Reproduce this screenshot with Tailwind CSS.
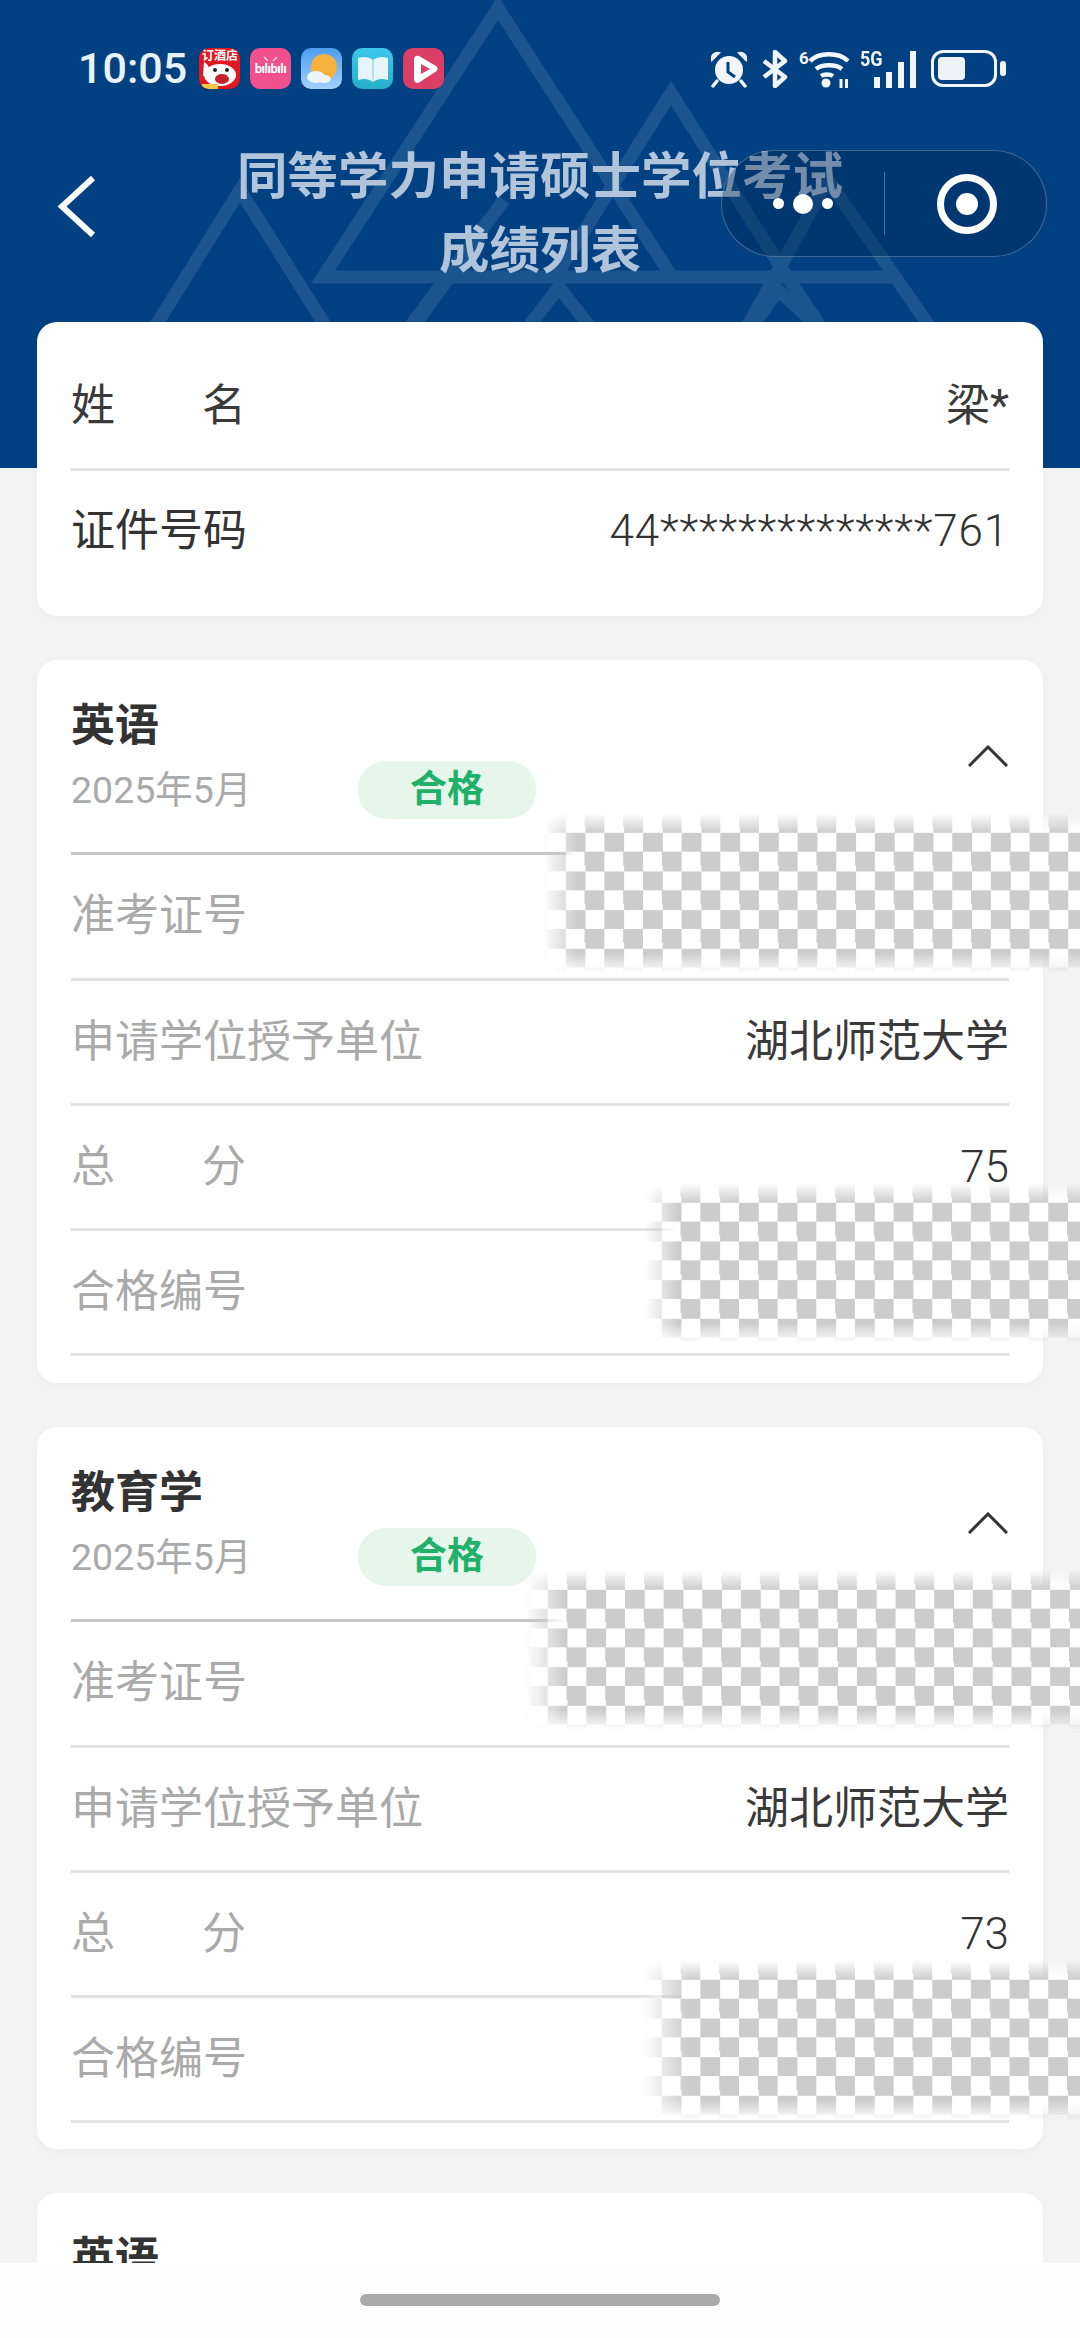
<!DOCTYPE html>
<html lang="zh-CN">
<head>
    <meta charset="UTF-8">
    <meta name="viewport" content="width=device-width, initial-scale=1.0">
    <title>成绩列表</title>
    <script src="https://cdn.jsdelivr.net/npm/@tailwindcss/browser@4"></script>
</head>
<body class="bg-[#f3f3f3] font-['Roboto','Noto_Sans_CJK_SC',sans-serif]">
<div class="relative w-[1080px] h-[2338px] overflow-hidden">

    <!-- 顶部蓝色区域 -->
    <header class="relative h-[468px] pt-[48px] bg-[#024181] overflow-hidden">
        <svg class="absolute inset-0" width="1080" height="468" fill="none" stroke="#1a558f" stroke-width="13">
            <path d="M672 277 L498 8 L323 277 H899"/>
            <path d="M555 277 L671 93 L787 277 L850 370"/>
            <path d="M740 340 L828 180 L932 330"/>
            <path d="M400 340 L504 200"/>
            <path d="M153 330 L240 190 L328 330"/>
            <path d="M411 330 L480 235"/>
            <path d="M526 330 L559 287 L592 330"/>
            <path d="M750 330 L778 290 L822 330"/>
        </svg>

        <!-- 状态栏 -->
        <div class="relative flex items-center h-[41px] pl-[78px] pr-[74px]">
            <span class="text-[43px] leading-[41px] font-medium text-[#e9f2fb] w-[121px] shrink-0">10:05</span>
            <div class="flex gap-[10px]">
                <div class="relative w-[41px] h-[41px] rounded-[10px] bg-[#e3171f] overflow-hidden">
                    <span class="absolute left-[3px] top-[2px] text-[12px] leading-[13px] font-bold text-white whitespace-nowrap">订酒店</span>
                    <svg class="absolute inset-0" width="41" height="41"><ellipse cx="21" cy="27" rx="16" ry="11" fill="#fff"/><path d="M5 14c4 2 6 6 5 12l-6 2z" fill="#fff"/><ellipse cx="23" cy="31" rx="7" ry="5" fill="#c5242b"/><circle cx="16" cy="22" r="2" fill="#222"/><circle cx="28" cy="22" r="2" fill="#222"/><rect x="3" y="36" width="16" height="5" fill="#f4c84a"/></svg>
                </div>
                <div class="relative w-[41px] h-[41px] rounded-[10px] bg-[#f0508c] flex items-center justify-center">
                    <svg class="absolute inset-0" width="41" height="41" fill="none" stroke="#ffd3e3" stroke-width="1.500"><path d="M14 9l4 4M27 9l-4 4"/></svg>
                    <span class="relative text-[13px] leading-none font-bold text-white tracking-[-0.5px]">bılıbılı</span>
                </div>
                <div class="relative w-[41px] h-[41px] rounded-[10px] bg-gradient-to-b from-[#4d9cf0] to-[#a3d2fa] overflow-hidden">
                    <svg class="absolute inset-0" width="41" height="41"><circle cx="23" cy="19" r="13" fill="#f7b23c"/><ellipse cx="15" cy="29" rx="9" ry="6" fill="#eef6fc"/><ellipse cx="23" cy="31" rx="7" ry="4" fill="#eef6fc"/></svg>
                </div>
                <div class="relative w-[41px] h-[41px] rounded-[10px] bg-gradient-to-b from-[#3cc8ec] to-[#25afc8] overflow-hidden">
                    <svg class="absolute inset-0" width="41" height="41"><path d="M6 10c6-2 11-1 15 2c4-3 9-4 15-2v22c-6-2-11-1-15 2c-4-3-9-4-15-2z" fill="#e6f4fb"/><path d="M21 12v22" stroke="#b7dcec" stroke-width="2"/></svg>
                </div>
                <div class="relative w-[41px] h-[41px] rounded-[10px] bg-[#dc3e66] overflow-hidden">
                    <svg class="absolute inset-0" width="41" height="41"><path d="M11 11c0-3 3-4 5-3l17 10c2 1.500 2 4 0 5.500l-17 11c-2 1-5 0-5-3z" fill="#fff"/><path d="M18 16l9 5-9 5z" fill="#dc3e66"/></svg>
                </div>
            </div>
            <div class="ml-auto flex items-center">
                <!-- 闹钟 -->
                <svg class="w-[38px] h-[38px]" viewBox="0 0 38 38">
                    <circle cx="19" cy="20" r="14" fill="#f2f6fb"/>
                    <path d="M2 10 L9 3 C5 2 1 5 2 10Z M36 10 L29 3 C33 2 37 5 36 10Z" fill="#f2f6fb" stroke="#f2f6fb" stroke-width="2"/>
                    <path d="M7 31l-4 5M31 31l4 5" stroke="#f2f6fb" stroke-width="3.500" stroke-linecap="round"/>
                    <path d="M18 12v10l7 5" fill="none" stroke="#024181" stroke-width="3"/>
                </svg>
                <!-- 蓝牙 -->
                <svg class="ml-[14px] w-[26px] h-[38px]" viewBox="0 0 26 38" fill="none" stroke="#f2f6fb" stroke-width="4.500" stroke-linejoin="round">
                    <path d="M2 11l21 16-10 9V2l10 9L2 27"/>
                </svg>
                <!-- wifi -->
                <div class="relative ml-[11px] w-[52px] h-[40px]">
                    <span class="absolute left-0 top-0 text-[17px] leading-[18px] font-bold text-[#f2f6fb]">6</span>
                    <svg class="absolute inset-0" width="52" height="40" fill="none" stroke="#f2f6fb" stroke-width="4.500">
                        <path d="M11 12c9-9 29-9 38 0M17 20c6-5 20-5 26 0M22 27c3-2 9-2 12 0"/>
                        <circle cx="27" cy="34" r="4.500" fill="#f2f6fb" stroke="none"/>
                        <path d="M42 39v-9M47.500 30v9" stroke-width="3"/>
                    </svg>
                </div>
                <!-- 5G 信号 -->
                <div class="relative ml-[9px] w-[56px] h-[38px]">
                    <span class="absolute left-0 top-0 text-[20px] leading-[18px] font-bold text-[#f2f6fb] scale-x-90 origin-left">5G</span>
                    <div class="absolute right-0 bottom-0 flex items-end gap-[6px]">
                        <div class="w-[6px] h-[11px] bg-[#f2f6fb]"></div>
                        <div class="w-[6px] h-[16px] bg-[#f2f6fb]"></div>
                        <div class="w-[6px] h-[26px] bg-[#f2f6fb]"></div>
                        <div class="w-[6px] h-[37px] bg-[#f2f6fb]"></div>
                    </div>
                </div>
                <!-- 电池 -->
                <div class="ml-[15px] relative flex items-center">
                    <div class="w-[66px] h-[37px] rounded-[12px] border-[3px] border-[#f2f6fb] p-[4px]">
                        <div class="w-[27px] h-full rounded-[4px] bg-[#eef3fa]"></div>
                    </div>
                    <div class="ml-[3px] w-[6px] h-[15px] rounded-[3px] bg-[#f2f6fb]"></div>
                </div>
            </div>
        </div>

        <!-- 导航 -->
        <svg class="absolute left-[55px] top-[170px]" width="44" height="74" fill="none" stroke="#fff" stroke-width="6">
            <path d="M38 8 L7 36.500 L38 65"/>
        </svg>
        <h1 class="absolute left-0 top-[135px] w-[1080px] text-center text-[50.500px] leading-[74px] font-bold text-[#b1c4da] font-['Noto_Sans_CJK_SC',sans-serif]">同等学力申请硕士学位考试<br>成绩列表</h1>

        <!-- 小程序胶囊 -->
        <div class="absolute left-[721px] top-[150px] w-[326px] h-[107px] rounded-full bg-[#01244f]/35 border border-white/25 flex items-center">
            <div class="w-[162px] flex items-center justify-center gap-[9px]">
                <div class="w-[11px] h-[11px] rounded-full bg-white"></div>
                <div class="w-[20px] h-[20px] rounded-full bg-white"></div>
                <div class="w-[11px] h-[11px] rounded-full bg-white"></div>
            </div>
            <div class="w-px h-[63px] bg-white/30"></div>
            <div class="flex-1 flex items-center justify-center pl-[3px]">
                <div class="w-[60px] h-[60px] rounded-full border-[7px] border-white flex items-center justify-center">
                    <div class="w-[22px] h-[22px] rounded-full bg-white"></div>
                </div>
            </div>
        </div>
    </header>

    <main class="relative -mt-[146px] px-[37px] flex flex-col gap-[44px]">

        <!-- 个人信息 -->
        <section class="bg-white rounded-[20px] h-[294px] px-[34px] shadow-[0_2px_10px_rgba(0,0,0,0.03)]">
            <div class="h-[149px] border-b-[3px] border-[#e2e2e2] flex items-center justify-between text-[44px] text-[#3a3a3a] pt-[22px]">
                <div class="flex justify-between w-[175px]"><span>姓</span><span>名</span></div>
                <span>梁*</span>
            </div>
            <div class="h-[120px] flex items-center justify-between text-[44px] text-[#333]">
                <span>证件号码</span>
                <span class="font-light tracking-[0.85px]">44**************761</span>
            </div>
        </section>

        <!-- 英语 -->
        <section class="relative bg-white rounded-[20px] h-[723px] px-[34px] shadow-[0_2px_10px_rgba(0,0,0,0.03)]">
            <div class="relative h-[195px] border-b-[3px] border-[#c6c6c6]">
                <div class="pt-[41px] text-[44px] leading-[50px] font-bold text-[#333]">英语</div>
                <div class="flex items-center mt-[10px]">
                    <span class="w-[287px] text-[37.500px] leading-[58px] text-[#aaa]">2025年5月</span>
                    <span class="w-[178px] h-[58px] rounded-[28px] bg-[#e6f6ea] text-[37px] leading-[58px] font-bold text-center text-[#1fb06a]">合格</span>
                </div>
                <svg class="absolute right-[1px] top-[85px]" width="40" height="22" fill="none" stroke="#333" stroke-width="3"><path d="M1 21 L20 2 L39 21"/></svg>
            </div>
            <div class="h-[126px] pb-[1px] border-b-[3px] border-[#e2e2e2] flex items-center justify-between text-[44px] text-[#aaa]"><span>准考证号</span></div>
            <div class="h-[125px] pb-[1px] border-b-[3px] border-[#e2e2e2] flex items-center justify-between text-[44px] text-[#aaa]"><span>申请学位授予单位</span><span class="text-[#3a3a3a]">湖北师范大学</span></div>
            <div class="h-[125px] pb-[1px] border-b-[3px] border-[#e2e2e2] flex items-center justify-between text-[44px] text-[#aaa]"><div class="flex justify-between w-[175px]"><span>总</span><span>分</span></div><span class="font-light text-[#333]">75</span></div>
            <div class="h-[125px] pb-[1px] border-b-[3px] border-[#e2e2e2] flex items-center justify-between text-[44px] text-[#aaa]"><span>合格编号</span></div>
        </section>

        <!-- 教育学 -->
        <section class="relative bg-white rounded-[20px] h-[722px] px-[34px] shadow-[0_2px_10px_rgba(0,0,0,0.03)]">
            <div class="relative h-[195px] border-b-[3px] border-[#c6c6c6]">
                <div class="pt-[41px] text-[44px] leading-[50px] font-bold text-[#333]">教育学</div>
                <div class="flex items-center mt-[10px]">
                    <span class="w-[287px] text-[37.500px] leading-[58px] text-[#aaa]">2025年5月</span>
                    <span class="w-[178px] h-[58px] rounded-[28px] bg-[#e6f6ea] text-[37px] leading-[58px] font-bold text-center text-[#1fb06a]">合格</span>
                </div>
                <svg class="absolute right-[1px] top-[85px]" width="40" height="22" fill="none" stroke="#333" stroke-width="3"><path d="M1 21 L20 2 L39 21"/></svg>
            </div>
            <div class="h-[126px] pb-[1px] border-b-[3px] border-[#e2e2e2] flex items-center justify-between text-[44px] text-[#aaa]"><span>准考证号</span></div>
            <div class="h-[125px] pb-[1px] border-b-[3px] border-[#e2e2e2] flex items-center justify-between text-[44px] text-[#aaa]"><span>申请学位授予单位</span><span class="text-[#3a3a3a]">湖北师范大学</span></div>
            <div class="h-[125px] pb-[1px] border-b-[3px] border-[#e2e2e2] flex items-center justify-between text-[44px] text-[#aaa]"><div class="flex justify-between w-[175px]"><span>总</span><span>分</span></div><span class="font-light text-[#333]">73</span></div>
            <div class="h-[125px] pb-[1px] border-b-[3px] border-[#e2e2e2] flex items-center justify-between text-[44px] text-[#aaa]"><span>合格编号</span></div>
        </section>

        <!-- 英语（被底栏遮挡） -->
        <section class="bg-white rounded-[20px] h-[400px] px-[34px]">
            <div class="pt-[41px] text-[44px] leading-[50px] font-bold text-[#333]">英语</div>
        </section>
    </main>

    <!-- 打码区域 -->
    <div class="absolute left-[527px] top-[813px] w-[553px] h-[160px] blur-[0.6px] bg-[repeating-conic-gradient(#cccccc_0_25%,#fff_0_50%)] bg-[length:38.66px_38.66px] [mask-image:linear-gradient(to_bottom,transparent,#000_20px,#000_140px,transparent),linear-gradient(to_right,transparent_16px,#000_50px)] [mask-composite:intersect]"></div>
    <div class="absolute left-[623px] top-[1183px] w-[457px] h-[160px] blur-[0.6px] bg-[repeating-conic-gradient(#cccccc_0_25%,#fff_0_50%)] bg-[length:38.66px_38.66px] [mask-image:linear-gradient(to_bottom,transparent,#000_20px,#000_140px,transparent),linear-gradient(to_right,transparent_22px,#000_55px)] [mask-composite:intersect]"></div>
    <div class="absolute left-[509px] top-[1570px] w-[571px] h-[160px] blur-[0.6px] bg-[repeating-conic-gradient(#cccccc_0_25%,#fff_0_50%)] bg-[length:38.66px_38.66px] [mask-image:linear-gradient(to_bottom,transparent,#000_20px,#000_140px,transparent),linear-gradient(to_right,transparent_16px,#000_56px)] [mask-composite:intersect]"></div>
    <div class="absolute left-[623px] top-[1960px] w-[457px] h-[160px] blur-[0.6px] bg-[repeating-conic-gradient(#cccccc_0_25%,#fff_0_50%)] bg-[length:38.66px_38.66px] [mask-image:linear-gradient(to_bottom,transparent,#000_20px,#000_140px,transparent),linear-gradient(to_right,transparent_20px,#000_65px)] [mask-composite:intersect]"></div>

    <!-- 底部手势条 -->
    <div class="absolute left-0 bottom-0 w-full h-[75px] bg-[#fdfdfd] flex justify-center pt-[31px]">
        <div class="w-[360px] h-[12px] rounded-full bg-[#aaaaaa]"></div>
    </div>
</div>
</body>
</html>
